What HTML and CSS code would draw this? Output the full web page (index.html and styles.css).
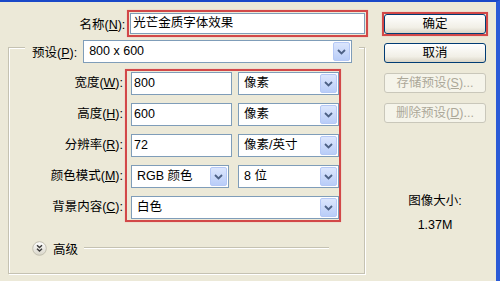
FILE: index.html
```html
<!DOCTYPE html>
<html lang="zh-CN">
<head>
    <meta charset="UTF-8">
    <meta name="viewport" content="width=device-width, initial-scale=1.0">
    <title>新建</title>
    <link rel="stylesheet" href="styles.css">
</head>
<body>
    <div class="window">
        <div class="main">
            <div class="name-row">
                <span class="label name-label">名称(<u>N</u>):</span>
                <div class="hl name-box">
                    <div class="input">光芒金质字体效果</div>
                </div>
            </div>

            <div class="group">
                <div class="preset-row">
                    <span class="label">预设(<u>P</u>):</span>
                    <div class="select preset-select">
                        <span>800 x 600</span>
                        <i class="arrow"><svg width="9" height="6" viewBox="0 0 9 6"><polyline points="1,1 4.5,4.5 8,1" fill="none" stroke="#4d6185" stroke-width="1.8"/></svg></i>
                    </div>
                </div>

                <div class="form">
                    <div class="labels">
                        <span class="label">宽度(<u>W</u>):</span>
                        <span class="label">高度(<u>H</u>):</span>
                        <span class="label">分辨率(<u>R</u>):</span>
                        <span class="label">颜色模式(<u>M</u>):</span>
                        <span class="label">背景内容(<u>C</u>):</span>
                    </div>
                    <div class="hl fields">
                        <div class="row">
                            <div class="input">800</div>
                            <div class="select"><span>像素</span><i class="arrow"><svg width="9" height="6" viewBox="0 0 9 6"><polyline points="1,1 4.5,4.5 8,1" fill="none" stroke="#4d6185" stroke-width="1.8"/></svg></i></div>
                        </div>
                        <div class="row">
                            <div class="input">600</div>
                            <div class="select"><span>像素</span><i class="arrow"><svg width="9" height="6" viewBox="0 0 9 6"><polyline points="1,1 4.5,4.5 8,1" fill="none" stroke="#4d6185" stroke-width="1.8"/></svg></i></div>
                        </div>
                        <div class="row">
                            <div class="input">72</div>
                            <div class="select"><span>像素/英寸</span><i class="arrow"><svg width="9" height="6" viewBox="0 0 9 6"><polyline points="1,1 4.5,4.5 8,1" fill="none" stroke="#4d6185" stroke-width="1.8"/></svg></i></div>
                        </div>
                        <div class="row">
                            <div class="select mode-select"><span>RGB 颜色</span><i class="arrow"><svg width="9" height="6" viewBox="0 0 9 6"><polyline points="1,1 4.5,4.5 8,1" fill="none" stroke="#4d6185" stroke-width="1.8"/></svg></i></div>
                            <div class="select"><span>8 位</span><i class="arrow"><svg width="9" height="6" viewBox="0 0 9 6"><polyline points="1,1 4.5,4.5 8,1" fill="none" stroke="#4d6185" stroke-width="1.8"/></svg></i></div>
                        </div>
                        <div class="row">
                            <div class="select wide"><span>白色</span><i class="arrow"><svg width="9" height="6" viewBox="0 0 9 6"><polyline points="1,1 4.5,4.5 8,1" fill="none" stroke="#4d6185" stroke-width="1.8"/></svg></i></div>
                        </div>
                    </div>
                </div>

                <div class="advanced">
                    <svg class="adv-icon" width="15" height="15" viewBox="0 0 15 15">
                        <defs>
                            <linearGradient id="advGrad" x1="0" y1="0" x2="0" y2="1">
                                <stop offset="0" stop-color="#ffffff"/>
                                <stop offset="1" stop-color="#d8d5c8"/>
                            </linearGradient>
                        </defs>
                        <circle cx="7.5" cy="7.5" r="6.8" fill="url(#advGrad)" stroke="#c2bfb0"/>
                        <polyline points="5,4.2 7.5,6.5 10,4.2" fill="none" stroke="#3a3a3a" stroke-width="1.4"/>
                        <polyline points="5,7.8 7.5,10.1 10,7.8" fill="none" stroke="#3a3a3a" stroke-width="1.4"/>
                    </svg>
                    <span class="adv-text">高级</span>
                    <span class="adv-line"></span>
                </div>
            </div>
        </div>

        <div class="side">
            <div class="hl ok-box">
                <button class="btn">确定</button>
            </div>
            <button class="btn cancel">取消</button>
            <button class="btn disabled">存储预设(<u>S</u>)...</button>
            <button class="btn disabled">删除预设(<u>D</u>)...</button>

            <div class="info">
                <div>图像大小:</div>
                <div>1.37M</div>
            </div>
        </div>
    </div>
</body>
</html>
```

FILE: styles.css
```css
html, body {
    margin: 0;
    padding: 0;
}

body {
    font-family: "Liberation Sans", "Noto Sans CJK SC", sans-serif;
    font-size: 12.5px;
    color: #000;
    background-color: #ece9d8;
}

u {
    text-decoration: underline;
    text-underline-offset: 1px;
}

.window {
    width: 500px;
    height: 281px;
    box-sizing: border-box;
    border-top: 2px solid #1a48c8;
    border-right: 4px solid #2a5ad6;
    background-color: #ece9d8;
    display: flex;
    overflow: hidden;
}

.main {
    width: 368px;
    flex-shrink: 0;
}

.label {
    white-space: nowrap;
}

/* red highlight boxes */
.hl {
    border: 2px solid #d24848;
    box-shadow: 0 0 1px #f0a0a0;
}

.name-row {
    display: flex;
    margin-top: 8px;
    align-items: center;
}

.name-label {
    width: 126px;
    text-align: right;
    padding-right: 2px;
}

.name-box {
    width: 236px;
    padding: 1px;
}

.input {
    box-sizing: border-box;
    height: 21px;
    line-height: 19px;
    border: 1px solid #7f9db9;
    background-color: #fff;
    padding-left: 2px;
    white-space: nowrap;
}

.name-box .input {
    padding-left: 2px;
}

.group {
    margin-top: 10px;
    margin-left: 8px;
    width: 357px;
    height: 227px;
    box-sizing: border-box;
    border: 1px solid #c5c2b2;
    box-shadow: inset 1px 1px 0 #fff, 1px 1px 0 #fff;
}

.preset-row {
    display: flex;
    align-items: center;
    gap: 6px;
    margin: -8px 5px 0 16px;
    padding: 0 7px;
    background-color: #ece9d8;
}

.select {
    position: relative;
    box-sizing: border-box;
    height: 23px;
    line-height: 21px;
    border: 1px solid #7f9db9;
    background-color: #fff;
    padding-left: 5px;
    white-space: nowrap;
}

.preset-select {
    flex: 1;
}

.arrow {
    position: absolute;
    top: 1px;
    right: 1px;
    bottom: 1px;
    width: 15px;
    border: 1px solid #b5c8f6;
    border-radius: 2px;
    background: linear-gradient(#dce6fd, #b9cdf8);
    display: flex;
    align-items: center;
    justify-content: center;
}

.form {
    display: flex;
    margin-top: 6px;
}

.labels {
    width: 114px;
    padding: 3px 2px 0 0;
    display: flex;
    flex-direction: column;
    align-items: flex-end;
    gap: 8px;
}

.labels .label {
    height: 23px;
    line-height: 23px;
}

.fields {
    width: 208px;
    padding: 1px 0 1px 4px;
    display: flex;
    flex-direction: column;
    gap: 8px;
}

.row {
    display: grid;
    grid-template-columns: 101px 101px;
    column-gap: 6px;
}

.row .input {
    height: 23px;
    line-height: 21px;
}

.mode-select {
    width: 98px;
}

.wide {
    grid-column: 1 / 3;
}

.advanced {
    display: flex;
    align-items: center;
    margin: 19px 35px 0 23px;
    height: 15px;
}

.adv-icon {
    flex-shrink: 0;
}

.adv-text {
    margin-left: 6px;
}

.adv-line {
    flex: 1;
    height: 1px;
    margin: -3px 0 0 6px;
    background-color: #c5c2b2;
    box-shadow: 0 1px 0 #fff;
}

.side {
    margin-left: 14px;
    margin-top: 10px;
    width: 106px;
    display: flex;
    flex-direction: column;
    align-items: flex-start;
}

.ok-box {
    padding: 0;
}

.btn {
    box-sizing: border-box;
    width: 102px;
    height: 20px;
    padding: 0;
    border: 1px solid #003c74;
    border-radius: 3px;
    background: linear-gradient(#ffffff, #f1efe6 70%, #d9d4c6);
    font-family: "Liberation Sans", "Noto Sans CJK SC", sans-serif;
    font-size: 12.5px;
    line-height: 18px;
    color: #000;
    margin-left: 2px;
}

.ok-box .btn {
    margin-left: 0;
    display: block;
}

.cancel {
    margin-top: 7px;
}

.disabled {
    margin-top: 10px;
    color: #aca899;
    border-color: #c9c7ba;
    background: #f5f4ea;
}

.info {
    margin-top: 67px;
    align-self: stretch;
    text-align: center;
    display: flex;
    flex-direction: column;
    gap: 9px;
}
```
